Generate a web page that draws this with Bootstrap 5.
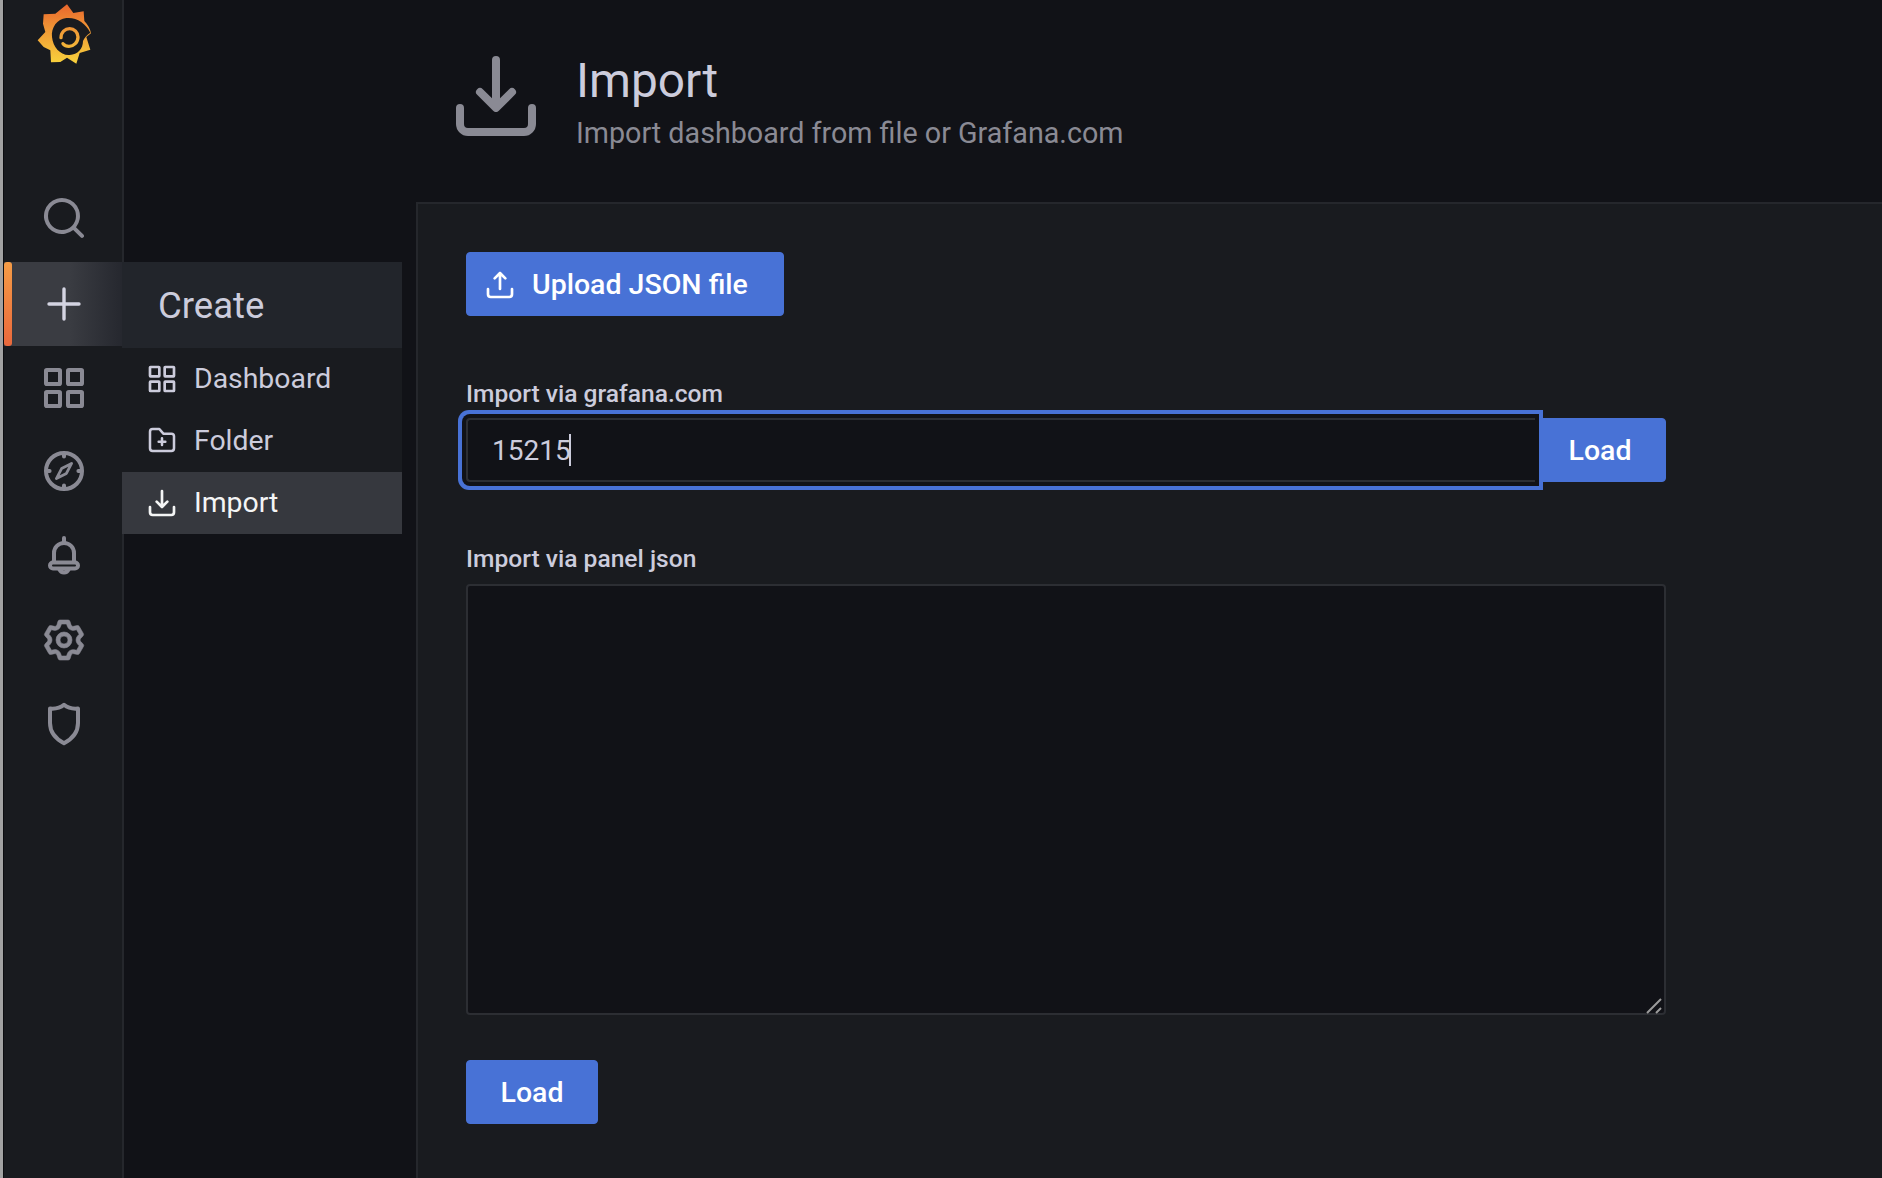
<!DOCTYPE html>
<html lang="en">
<head>
<meta charset="utf-8">
<title>Import - Grafana</title>
<link href="https://cdn.jsdelivr.net/npm/bootstrap@5.3.0/dist/css/bootstrap.min.css" rel="stylesheet">
<style>
html,body{height:100%;margin:0;overflow:hidden}
body{background:#111217;color:#ccccdc;font-family:Roboto,"Liberation Sans",sans-serif}
.shell{height:1178px;width:1882px}
.edge{width:3px;background:#a2a2a2;flex:none}
.edge2{width:1px;background:#0c0d10;flex:none}
.side{width:120px;flex:none;background:#191b1f;border-right:2px solid #25272c;position:relative}
.logo-wrap{height:176px;padding:2px 0 0 33px}
.nav-row{height:84.3px;display:flex;align-items:center;justify-content:center;color:#8a8a94;position:relative;padding-left:2px}
.nav-row.first{height:86px;padding-bottom:2px}
.nav-row.after{height:83px}
.nav-row.on{color:#d4d4e2;background:linear-gradient(90deg,#3a3c42 0%,#3a3c42 55%,#25272e 100%);height:84px;margin-right:-2px;padding-left:0;z-index:2}
.nav-row.on::before{content:"";position:absolute;left:0;top:0;bottom:0;width:8px;border-radius:3px;background:linear-gradient(180deg,#f59c46,#e9683c)}
.fly{position:absolute;left:118px;top:0;width:280px;background:#191b1f;z-index:3}
.fly-head{height:86px;background:#22252b;padding:1px 0 0 36px;font-size:36.500px;line-height:86px;color:#ccccdc}
.fly-item{height:62px;display:flex;align-items:center;padding-left:24px;gap:16px;font-size:28.400px;color:#ccccdc}
.fly-item svg{flex:none}
.fly-item.sel{background:#36383e;color:#f4f5f5}
.main-col{min-width:0}
.top-head{height:202px;padding:48px 0 0 324px;gap:32px}
.ttl{font-size:47.800px;line-height:56px;font-weight:400;color:#ccccdc;margin:5px 0 0}
.sub{font-size:28.700px;line-height:34px;color:#8a8a94;margin:7px 0 0}
.panel{margin-left:292px;background:#191b1f;border-top:2px solid #25272c;border-left:2px solid #25272c;padding:48px 48px 0 48px}
.btn-go{--bs-btn-bg:#4872d6;--bs-btn-border-color:#4872d6;--bs-btn-hover-bg:#4872d6;--bs-btn-hover-border-color:#4872d6;--bs-btn-color:#fff;--bs-btn-hover-color:#fff;height:64px;font-size:28.500px;font-weight:500;border-radius:4px;padding:2px 0 0;display:inline-flex;align-items:center;justify-content:center}
.btn-upload{width:318px;justify-content:flex-start;padding-left:17px;gap:16px}
.btn-load{width:132px}
.input-group .btn-load{z-index:1}
.lbl{font-size:24.600px;line-height:30px;font-weight:500;color:#ccccdc;margin:0 0 8px}
.box-wrap{width:1200px}
.sect-a{margin-top:63px}
.sect-a .lbl{margin-bottom:9px}
.sect-b{margin-top:62px}
.sect-b .lbl{margin-bottom:10px}
.load-b{margin-top:45px}
.inp{height:64px;background:#111217;border:2px solid #2c2e33;border-right:0;border-radius:4px 0 0 4px;color:#ccccdc;font-size:28px;padding:0 24px;box-shadow:0 0 0 4px #111217,0 0 0 8px #4872d6;font-family:inherit;position:relative;z-index:5!important}
.inp:focus{background:#111217;color:#ccccdc;border-color:#2c2e33;box-shadow:0 0 0 4px #111217,0 0 0 8px #4872d6}
.caret-bar{position:absolute;left:104px;top:16px;width:2px;height:32px;background:#ccccdc;z-index:6}
.txt{height:431px;background:#111217;border:2px solid #2c2e33;border-radius:4px;resize:none;color:#ccccdc;display:block}
.txt:focus{background:#111217;box-shadow:none;border-color:#2c2e33}
.grip{position:absolute;right:2px;bottom:1px}
</style>
</head>
<body>
<div class="shell d-flex">
  <div class="edge"></div><div class="edge2"></div>
  <nav class="side">
    <div class="logo-wrap">
      <svg width="55" height="64" viewBox="110 5 165 192" role="img" aria-label="Grafana">
        <defs><linearGradient id="gf" gradientUnits="userSpaceOnUse" x1="190" y1="10" x2="190" y2="190"><stop offset="0" stop-color="#e8642c"/><stop offset=".45" stop-color="#f09a36"/><stop offset="1" stop-color="#f8d23c"/></linearGradient></defs>
        <path fill="url(#gf)" d="M200 12 L219 38 L250 33 L252 62 C262 72 270 85 272 99 L258 110 L270 148 L238 158 L228 190 L200 172 L180 185 L152 186 L150 150 L130 140 L112 120 L135 95 L128 70 L130 42 L165 40 Z"/>
        <path fill="#191b1f" d="M270 97 C256 68 228 50 198 53 C170 56 152 82 155 110 C158 140 180 166 208 164 C232 162 248 146 248 122 C252 112 260 104 270 97 Z"/>
        <path fill="none" stroke="url(#gf)" stroke-width="10" stroke-linecap="round" d="M182 112 C182 96 194 85 208 85 C222 85 233 96 233 110 C233 126 220 138 206 138 C198 138 192 135 188 130"/>
      </svg>
    </div>
    <div class="nav-row first"><svg width="48" height="48" viewBox="0 0 24 24" fill="currentColor"><path d="M21.71,20.29,18,16.61A9,9,0,1,0,16.61,18l3.68,3.68a1,1,0,0,0,1.42,0A1,1,0,0,0,21.71,20.29ZM11,18a7,7,0,1,1,7-7A7,7,0,0,1,11,18Z"/></svg></div>
    <div class="nav-row on">
      <svg width="48" height="48" viewBox="0 0 24 24" fill="none" stroke="currentColor" stroke-width="1.7" stroke-linecap="round"><path d="M12 4.500V19.500M4.500 12H19.500"/></svg>
      <div class="fly">
        <div class="fly-head">Create</div>
        <a class="fly-item text-decoration-none"><svg width="32" height="32" viewBox="0 0 24 24" fill="none" stroke="currentColor" stroke-width="2"><rect x="3" y="3" width="7" height="7" rx=".4"/><rect x="14" y="3" width="7" height="7" rx=".4"/><rect x="3" y="14" width="7" height="7" rx=".4"/><rect x="14" y="14" width="7" height="7" rx=".4"/></svg>Dashboard</a>
        <a class="fly-item text-decoration-none"><svg width="32" height="32" viewBox="0 0 24 24" fill="none" stroke="currentColor" stroke-width="1.900" stroke-linecap="round" stroke-linejoin="round"><path d="M3 5A2 2 0 0 1 5 3H10L13 6.500H19A2 2 0 0 1 21 8.500V17.500A2 2 0 0 1 19 19.500H5A2 2 0 0 1 3 17.500Z"/><path d="M12 10V15M9.500 12.500H14.500"/></svg>Folder</a>
        <a class="fly-item sel text-decoration-none"><svg width="32" height="32" viewBox="0 0 24 24" fill="currentColor"><path d="M21,14a1,1,0,0,0-1,1v4a1,1,0,0,1-1,1H5a1,1,0,0,1-1-1V15a1,1,0,0,0-2,0v4a3,3,0,0,0,3,3H19a3,3,0,0,0,3-3V15A1,1,0,0,0,21,14Zm-9.710,1.710a1,1,0,0,0,.33.21.94.94,0,0,0,.76,0,1,1,0,0,0,.33-.21l4-4a1,1,0,0,0-1.420-1.420L13,12.590V3a1,1,0,0,0-2,0v9.590l-2.290-2.300a1,1,0,1,0-1.420,1.420Z"/></svg>Import</a>
      </div>
    </div>
    <div class="nav-row after"><svg width="48" height="48" viewBox="0 0 24 24" fill="none" stroke="currentColor" stroke-width="2"><rect x="3" y="3" width="7" height="7" rx=".4"/><rect x="14" y="3" width="7" height="7" rx=".4"/><rect x="3" y="14" width="7" height="7" rx=".4"/><rect x="14" y="14" width="7" height="7" rx=".4"/></svg></div>
    <div class="nav-row"><svg width="48" height="48" viewBox="0 0 24 24" fill="none" stroke="currentColor" stroke-width="2" stroke-linecap="round" stroke-linejoin="round"><circle cx="12" cy="12" r="9"/><path d="M12 3.500V4.800M12 19.200V20.500M3.500 12H4.800M19.200 12H20.500"/><path stroke-width="1.400" d="M15.800 8.200L13.200 13.200L8.200 15.800L10.800 10.800Z"/></svg></div>
    <div class="nav-row"><svg width="48" height="48" viewBox="0 0 24 24" fill="none" stroke="currentColor" stroke-width="2" stroke-linecap="round" stroke-linejoin="round"><path d="M12 3.500V5.500"/><path d="M7 15.500V11A5 5 0 0 1 17 11V15.500"/><path d="M6.500 15.750H17.500A1.500 1.500 0 0 1 17.500 18.750H6.500A1.500 1.500 0 0 1 6.500 15.750Z"/><path d="M9.700 19.200A2.500 2.500 0 0 0 14.300 19.200"/></svg></div>
    <div class="nav-row"><svg width="48" height="48" viewBox="0 0 24 24" fill="currentColor" stroke="currentColor" stroke-width=".3"><path transform="translate(.36 0)" d="M19.900,12.660a1,1,0,0,1,0-1.320L21.180,9.900a1,1,0,0,0,.12-1.170l-2-3.460a1,1,0,0,0-1.070-.48l-1.880.38a1,1,0,0,1-1.150-.66l-.61-1.830A1,1,0,0,0,13.640,2h-4a1,1,0,0,0-1,.68L8.080,4.510a1,1,0,0,1-1.150.66L5,4.790A1,1,0,0,0,4,5.270L2,8.730A1,1,0,0,0,2.100,9.900l1.270,1.440a1,1,0,0,1,0,1.320L2.100,14.100A1,1,0,0,0,2,15.270l2,3.460a1,1,0,0,0,1.070.48l1.880-.38a1,1,0,0,1,1.150.66l.61,1.830a1,1,0,0,0,1,.68h4a1,1,0,0,0,.95-.68l.61-1.830a1,1,0,0,1,1.150-.66l1.880.38a1,1,0,0,0,1.070-.48l2-3.460a1,1,0,0,0-.12-1.170ZM18.410,14l.8.9-1.280,2.220-1.180-.24a3,3,0,0,0-3.450,2L12.920,20H10.360L10,18.860a3,3,0,0,0-3.450-2l-1.180.24L4.070,14.890l.8-.9a3,3,0,0,0,0-4l-.8-.9L5.350,6.890l1.180.24a3,3,0,0,0,3.450-2L10.360,4h2.560l.38,1.140a3,3,0,0,0,3.450,2l1.180-.24,1.280,2.220-.8.9A3,3,0,0,0,18.410,14ZM11.640,8a4,4,0,1,0,4,4A4,4,0,0,0,11.640,8Zm0,6a2,2,0,1,1,2-2A2,2,0,0,1,11.640,14Z"/></svg></div>
    <div class="nav-row"><svg width="48" height="48" viewBox="0 0 24 24" fill="none" stroke="currentColor" stroke-width="2" stroke-linejoin="round"><path d="M5 4.300C8 4.600 10.200 3.900 12 2.400C13.800 3.900 16 4.600 19 4.300V11.500C19 16 16 19.500 12 21.600C8 19.500 5 16 5 11.500Z"/></svg></div>
  </nav>
  <main class="main-col flex-grow-1 d-flex flex-column">
    <header class="top-head d-flex align-items-start">
      <svg width="96" height="96" viewBox="0 0 24 24" fill="#8a8a94"><path d="M21,14a1,1,0,0,0-1,1v4a1,1,0,0,1-1,1H5a1,1,0,0,1-1-1V15a1,1,0,0,0-2,0v4a3,3,0,0,0,3,3H19a3,3,0,0,0,3-3V15A1,1,0,0,0,21,14Zm-9.710,1.710a1,1,0,0,0,.33.21.94.94,0,0,0,.76,0,1,1,0,0,0,.33-.21l4-4a1,1,0,0,0-1.420-1.420L13,12.590V3a1,1,0,0,0-2,0v9.590l-2.290-2.300a1,1,0,1,0-1.420,1.420Z"/></svg>
      <div>
        <h1 class="ttl">Import</h1>
        <p class="sub">Import dashboard from file or Grafana.com</p>
      </div>
    </header>
    <section class="panel flex-grow-1">
      <button type="button" class="btn btn-go btn-upload"><svg width="32" height="32" viewBox="0 0 24 24" fill="#fff"><path d="M8.710,7.710,11,5.410V15a1,1,0,0,0,2,0V5.410l2.290,2.300a1,1,0,0,0,1.420,0,1,1,0,0,0,0-1.420l-4-4a1,1,0,0,0-.33-.21,1,1,0,0,0-.76,0,1,1,0,0,0-.33.21l-4,4A1,1,0,1,0,8.710,7.710ZM21,14a1,1,0,0,0-1,1v4a1,1,0,0,1-1,1H5a1,1,0,0,1-1-1V15a1,1,0,0,0-2,0v4a3,3,0,0,0,3,3H19a3,3,0,0,0,3-3V15A1,1,0,0,0,21,14Z"/></svg>Upload JSON file</button>
      <div class="box-wrap">
        <div class="sect-a">
          <label class="lbl d-block" for="gc">Import via grafana.com</label>
          <div class="input-group flex-nowrap position-relative">
            <input id="gc" class="form-control inp" type="text" value="15215" readonly>
            <span class="caret-bar"></span>
            <button type="button" class="btn btn-go btn-load">Load</button>
          </div>
        </div>
        <div class="sect-b">
          <label class="lbl d-block" for="pj">Import via panel json</label>
          <div class="position-relative">
            <textarea id="pj" class="form-control txt"></textarea>
            <svg class="grip" width="18" height="18" viewBox="0 0 18 18" stroke="#9b9b9b" stroke-width="2"><path d="M1 17L15 3M10 17L15 12"/></svg>
          </div>
        </div>
        <button type="button" class="btn btn-go btn-load load-b">Load</button>
      </div>
    </section>
  </main>
</div>
<script src="https://cdn.jsdelivr.net/npm/bootstrap@5.3.0/dist/js/bootstrap.bundle.min.js"></script>
</body>
</html>
